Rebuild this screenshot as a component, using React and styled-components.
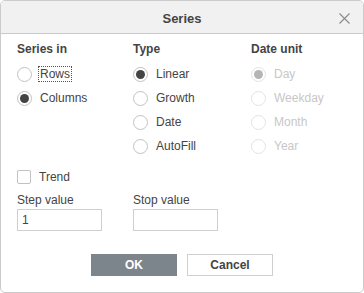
import React from "react";
import styled, { createGlobalStyle } from "styled-components";

const Global = createGlobalStyle`
  html, body { margin: 0; padding: 0; background: #fff; }
  body { font-family: "Liberation Sans", Arial, sans-serif; font-size: 12px; color: #444; }
`;

const Dialog = styled.div`
  box-sizing: border-box;
  width: 364px;
  height: 293px;
  border: 1px solid #cbcbcb;
  border-radius: 5px;
  overflow: hidden;
  display: flex;
  flex-direction: column;
  background: #fff;
`;

const Header = styled.div`
  box-sizing: border-box;
  height: 33px;
  padding-top: 2px;
  flex: none;
  background: #f1f1f1;
  border-bottom: 1px solid #cbcbcb;
  display: flex;
  align-items: center;
  justify-content: center;
  position: relative;
`;

const Title = styled.div`
  font-weight: bold;
  font-size: 13px;
  color: #444;
`;

const Close = styled.div`
  position: absolute;
  right: 13px;
  top: 12px;
  width: 11px;
  height: 11px;
  display: flex;
`;

const Body = styled.div`
  padding: 8px 15px 0 15px;
  display: flex;
  flex-direction: column;
`;

const Columns = styled.div`
  display: grid;
  grid-template-columns: 116px 118px 1fr;
`;

const Group = styled.div`
  display: flex;
  flex-direction: column;
`;

const GroupLabel = styled.div`
  font-weight: bold;
  height: 15px;
  line-height: 15px;
  margin-left: 1px;
  margin-bottom: 5px;
`;

const Option = styled.label`
  display: flex;
  align-items: center;
  height: 24px;
  padding-left: 1px;
  color: ${(p) => (p.$disabled ? "#c7c7c7" : "#444")};
`;

const Circle = styled.span`
  box-sizing: border-box;
  width: 15px;
  height: 15px;
  border-radius: 50%;
  border: 1px solid ${(p) => (p.$disabled ? "#e3e3e3" : "#c2c2c2")};
  display: flex;
  align-items: center;
  justify-content: center;
  margin-right: 8px;
  flex: none;
  &::after {
    content: "";
    display: ${(p) => (p.$checked ? "block" : "none")};
    width: 9px;
    height: 9px;
    border-radius: 50%;
    background: ${(p) => (p.$disabled ? "#b5b5b5" : "#444")};
  }
`;

const Text = styled.span`
  line-height: 14px;
  outline: ${(p) => (p.$focus ? "1px dotted #555" : "none")};
  padding: 0 1px;
  margin-left: -1px;
`;

const TrendRow = styled.label`
  display: flex;
  align-items: center;
  height: 16px;
  margin-top: 11px;
  padding-left: 1px;
`;

const Box = styled.span`
  box-sizing: border-box;
  width: 14px;
  height: 14px;
  border: 1px solid #c2c2c2;
  border-radius: 2px;
  margin-right: 8px;
`;

const Inputs = styled.div`
  display: grid;
  grid-template-columns: 116px 1fr;
  margin-top: 8px;
`;

const Field = styled.div`
  display: flex;
  flex-direction: column;
  padding-left: 1px;
`;

const FieldLabel = styled.div`
  line-height: 14px;
  height: 14px;
  margin-bottom: 2px;
`;

const Input = styled.div`
  box-sizing: border-box;
  width: 85px;
  height: 22px;
  border: 1px solid #cfcfcf;
  padding: 0 4px;
  display: flex;
  align-items: center;
  color: #444;
`;

const Footer = styled.div`
  display: flex;
  justify-content: center;
  gap: 10px;
  margin-top: 23px;
`;

const Button = styled.div`
  box-sizing: border-box;
  width: 86px;
  height: 22px;
  display: flex;
  align-items: center;
  justify-content: center;
  font-weight: bold;
  background: ${(p) => (p.$primary ? "#7d858c" : "#fff")};
  color: ${(p) => (p.$primary ? "#fff" : "#444")};
  border: 1px solid ${(p) => (p.$primary ? "#7d858c" : "#cfcfcf")};
`;

function Radio({ label, checked, disabled, focus }) {
  return (
    <Option $disabled={disabled}>
      <Circle $checked={checked} $disabled={disabled} />
      <Text $focus={focus}>{label}</Text>
    </Option>
  );
}

export default function App() {
  return (
    <>
      <Global />
      <Dialog>
        <Header>
          <Title>Series</Title>
          <Close>
            <svg width="11" height="11" viewBox="0 0 11 11">
              <path d="M0.5 0.5L10.5 10.5M10.5 0.5L0.5 10.5" stroke="#8a8a8a" strokeWidth="1.1" />
            </svg>
          </Close>
        </Header>
        <Body>
          <Columns>
            <Group>
              <GroupLabel>Series in</GroupLabel>
              <Radio label="Rows" focus />
              <Radio label="Columns" checked />
            </Group>
            <Group>
              <GroupLabel>Type</GroupLabel>
              <Radio label="Linear" checked />
              <Radio label="Growth" />
              <Radio label="Date" />
              <Radio label="AutoFill" />
            </Group>
            <Group>
              <GroupLabel>Date unit</GroupLabel>
              <Radio label="Day" checked disabled />
              <Radio label="Weekday" disabled />
              <Radio label="Month" disabled />
              <Radio label="Year" disabled />
            </Group>
          </Columns>
          <TrendRow>
            <Box />
            <Text>Trend</Text>
          </TrendRow>
          <Inputs>
            <Field>
              <FieldLabel>Step value</FieldLabel>
              <Input>1</Input>
            </Field>
            <Field>
              <FieldLabel>Stop value</FieldLabel>
              <Input />
            </Field>
          </Inputs>
          <Footer>
            <Button $primary>OK</Button>
            <Button>Cancel</Button>
          </Footer>
        </Body>
      </Dialog>
    </>
  );
}
